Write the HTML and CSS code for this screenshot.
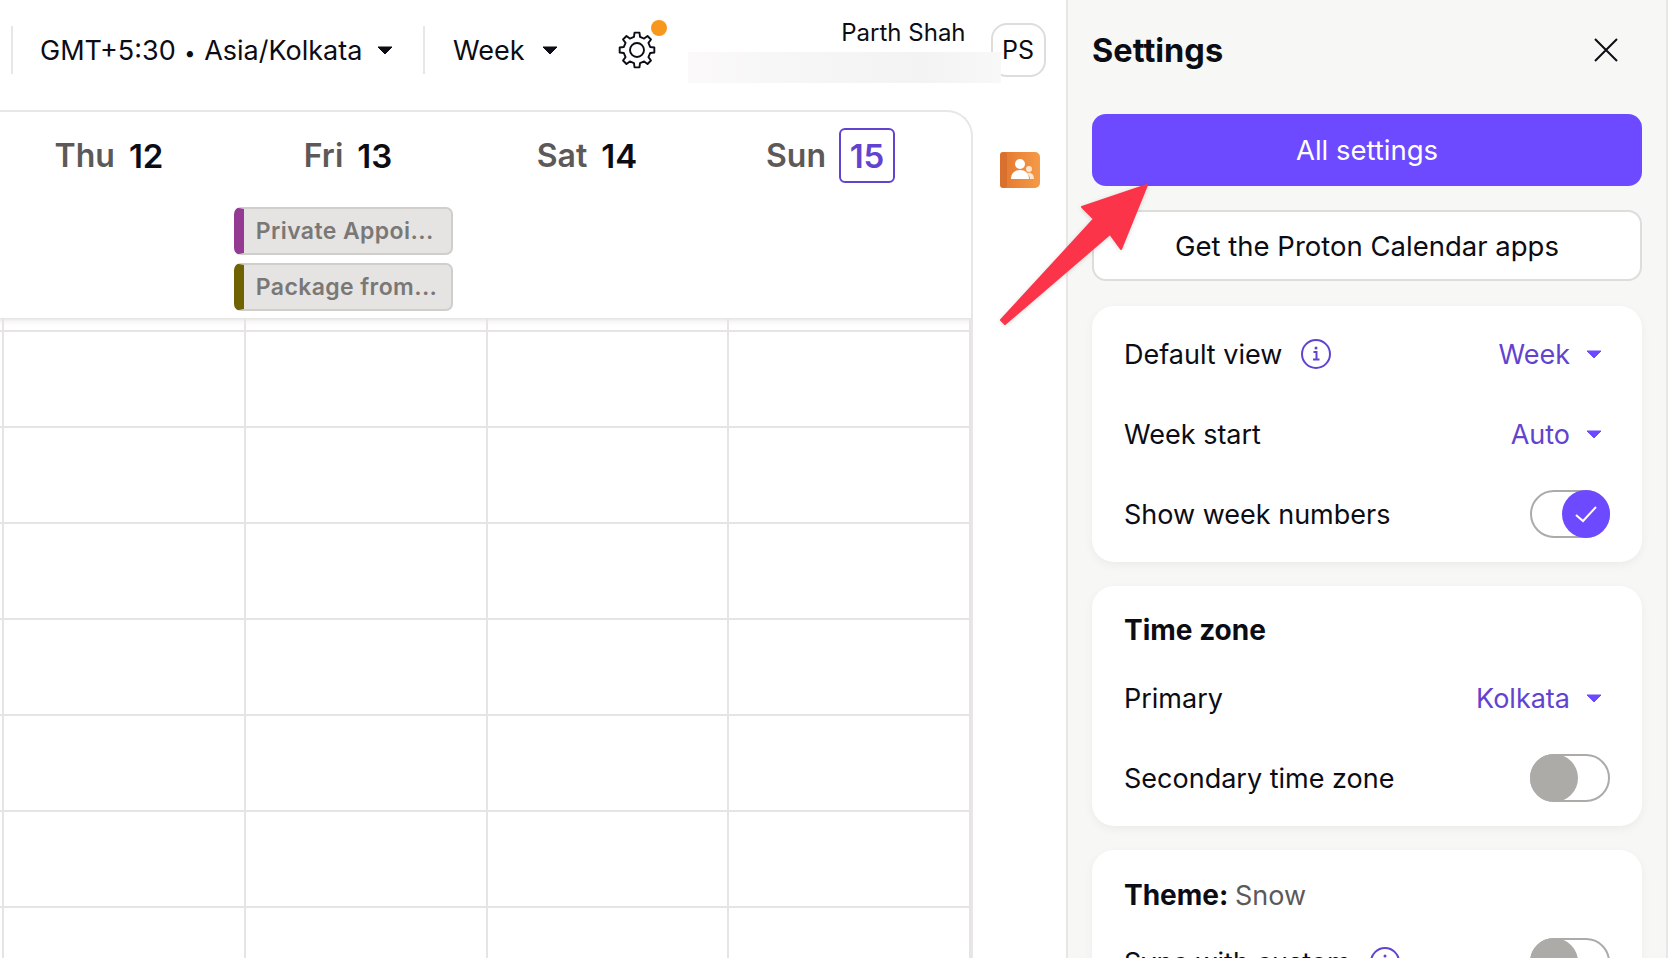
FILE: index.html
```html
<!DOCTYPE html>
<html lang="en">
<head>
<meta charset="utf-8">
<title>Proton Calendar</title>
<link rel="stylesheet" href="styles.css">
</head>
<body>
<div class="app">
  <main class="main">
    <header class="topbar">
      <span class="sep first"></span>
      <button class="tool tz"><span>GMT+5:30 <span class="bullet">•</span> Asia/Kolkata</span><svg class="caret" viewBox="0 0 16 9"><polygon points="1,1 15,1 8,8"/></svg></button>
      <span class="sep"></span>
      <button class="tool view"><span>Week</span><svg class="caret" viewBox="0 0 16 9"><polygon points="1,1 15,1 8,8"/></svg></button>
      <span class="gear-wrap">
        <svg class="gear" viewBox="-20 -20 40 40"><polygon points="-3.04,-13.15 -2.44,-17.33 2.44,-17.33 3.04,-13.15 7.15,-11.45 10.53,-13.98 13.98,-10.53 11.45,-7.15 13.15,-3.04 17.33,-2.44 17.33,2.44 13.15,3.04 11.45,7.15 13.98,10.53 10.53,13.98 7.15,11.45 3.04,13.15 2.44,17.33 -2.44,17.33 -3.04,13.15 -7.15,11.45 -10.53,13.98 -13.98,10.53 -11.45,7.15 -13.15,3.04 -17.33,2.44 -17.33,-2.44 -13.15,-3.04 -11.45,-7.15 -13.98,-10.53 -10.53,-13.98 -7.15,-11.45"/><circle r="7"/></svg>
        <span class="dot"></span>
      </span>
      <div class="user">
        <span class="user-name">Parth Shah</span>
        <span class="avatar">PS</span>
        <span class="redact"></span>
      </div>
    </header>
    <div class="body-row">
      <section class="calendar">
        <div class="days">
          <div class="day"><span class="dow">Thu</span><span class="num">12</span></div>
          <div class="day"><span class="dow">Fri</span><span class="num">13</span></div>
          <div class="day"><span class="dow">Sat</span><span class="num">14</span></div>
          <div class="day"><span class="dow">Sun</span><span class="num today">15</span></div>
        </div>
        <div class="cols allday">
          <div class="events">
            <div class="event purple">Private Appoi...</div>
            <div class="event olive">Package from...</div>
          </div>
        </div>
        <div class="grid">
          <div class="cell"></div><div class="cell"></div><div class="cell"></div><div class="cell"></div><div class="cell"></div>
          <div class="cell"></div><div class="cell"></div><div class="cell"></div><div class="cell"></div><div class="cell"></div>
          <div class="cell"></div><div class="cell"></div><div class="cell"></div><div class="cell"></div><div class="cell"></div>
          <div class="cell"></div><div class="cell"></div><div class="cell"></div><div class="cell"></div><div class="cell"></div>
          <div class="cell"></div><div class="cell"></div><div class="cell"></div><div class="cell"></div><div class="cell"></div>
          <div class="cell"></div><div class="cell"></div><div class="cell"></div><div class="cell"></div><div class="cell"></div>
          <div class="cell"></div><div class="cell"></div><div class="cell"></div><div class="cell"></div><div class="cell"></div>
          <div class="cell"></div><div class="cell"></div><div class="cell"></div><div class="cell"></div><div class="cell"></div>
        </div>
      </section>
      <aside class="rail">
        <svg class="contacts" viewBox="0 0 40 36">
          <defs><linearGradient id="og" x1="0" y1="0" x2="1" y2="0"><stop offset="0" stop-color="#e2762f"/><stop offset="1" stop-color="#f59a48"/></linearGradient></defs>
          <rect width="40" height="36" rx="5" fill="url(#og)"/>
          <rect width="7" height="36" rx="3" fill="#d9702e"/>
          <circle cx="20" cy="12" r="5" fill="#fff"/>
          <path d="M11 27c0-6 4-9 9-9s9 3 9 9z" fill="#fff"/>
          <circle cx="29" cy="17" r="3" fill="#fde6d2"/>
          <path d="M27 21c4-1 7 1 7 6h-4c0-2-1-4-3-6z" fill="#fde6d2"/>
        </svg>
      </aside>
    </div>
  </main>

  <aside class="settings">
    <div class="settings-head">
      <h1>Settings</h1>
      <svg class="close" viewBox="0 0 24 24"><path d="M1 1 23 23M23 1 1 23"/></svg>
    </div>
    <button class="btn primary">All settings</button>
    <button class="btn outline">Get the Proton Calendar apps</button>

    <section class="card">
      <div class="row">
        <span class="label">Default view<svg class="info" viewBox="0 0 30 30"><circle cx="15" cy="15" r="14"/><path d="M12.5 13h3v7M12 20.5h6.500"/><circle class="info-dot" cx="15" cy="9" r="1.500"/></svg></span>
        <span class="value">Week<svg class="caret small" viewBox="0 0 16 9"><polygon points="1,1 15,1 8,8"/></svg></span>
      </div>
      <div class="row">
        <span class="label">Week start</span>
        <span class="value">Auto<svg class="caret small" viewBox="0 0 16 9"><polygon points="1,1 15,1 8,8"/></svg></span>
      </div>
      <div class="row">
        <span class="label">Show week numbers</span>
        <span class="toggle on"><span class="knob"><svg viewBox="0 0 24 24"><path d="M2 13l7 6L22 5"/></svg></span></span>
      </div>
    </section>

    <section class="card">
      <h2 class="card-title">Time zone</h2>
      <div class="row">
        <span class="label">Primary</span>
        <span class="value">Kolkata<svg class="caret small" viewBox="0 0 16 9"><polygon points="1,1 15,1 8,8"/></svg></span>
      </div>
      <div class="row">
        <span class="label">Secondary time zone</span>
        <span class="toggle"><span class="knob"></span></span>
      </div>
    </section>

    <section class="card">
      <h2 class="card-title theme">Theme: <span class="muted">Snow</span></h2>
      <div class="row">
        <span class="label">Sync with custom<svg class="info" viewBox="0 0 30 30"><circle cx="15" cy="15" r="14"/><path d="M12.5 13h3v7M12 20.5h6.500"/><circle class="info-dot" cx="15" cy="9" r="1.500"/></svg></span>
        <span class="toggle"><span class="knob"></span></span>
      </div>
    </section>
  </aside>
</div>
<svg class="arrow" viewBox="990 175 170 160"><polygon points="1147,185 1082,207 1094,219 1001,320 1005,324 1110,234 1121,249"/></svg>
</body>
</html>
```

FILE: styles.css
```css
* { box-sizing: border-box; }
html, body { margin: 0; height: 100%; overflow: hidden; }
body { background: #fff; color: #0c0c14; font-family: Inter, "Liberation Sans", sans-serif; font-size: 27px; }
button { font: inherit; color: inherit; background: none; border: 0; padding: 0; }

.app { display: flex; height: 958px; }
.main { width: 1066px; flex: none; display: flex; flex-direction: column; }

/* top bar */
.topbar { height: 110px; flex: none; display: flex; align-items: center; padding: 0 0 10px 11px; }
.sep { width: 2px; height: 48px; background: #e8e7e5; flex: none; }
.tool { display: flex; align-items: center; flex: none; white-space: nowrap; }
.tz { margin: 0 30px 0 27px; width: 353px; justify-content: space-between; }
.bullet { font-size: 20px; margin: 0 1px; }
.view { margin-left: 28px; gap: 17px; }
.caret { width: 16px; height: 9px; fill: currentColor; stroke: currentColor; stroke-width: 1; stroke-linejoin: round; display: block; flex: none; }
.gear-wrap { position: relative; margin-left: 59px; width: 40px; height: 40px; flex: none; }
.gear { width: 40px; height: 40px; display: block; fill: none; stroke: #0c0c14; stroke-width: 1.9; stroke-linejoin: round; }
.dot { position: absolute; left: 34px; top: -10px; width: 16px; height: 16px; border-radius: 50%; background: #f7971d; }
.user { margin-left: 34px; width: 355px; height: 54px; flex: none; position: relative; display: flex; justify-content: flex-end; }
.user-name { font-size: 24px; line-height: 24px; margin: -2px 25px 0 0; white-space: nowrap; }
.avatar { width: 55px; height: 54px; flex: none; background: #fff; border: 2px solid #dedddb; border-radius: 16px; display: flex; align-items: center; justify-content: center; font-size: 25px; }
.redact { position: absolute; left: -3px; top: 29px; width: 313px; height: 31px; background: linear-gradient(90deg, #fbf9f9, #f5f5f5 50%, #f3f3f4 75%, #f8f8f8); }

/* calendar */
.body-row { flex: 1; min-height: 0; display: flex; }
.calendar { width: 973px; flex: none; border-top: 2px solid #e8e7e5; border-right: 2px solid #e8e7e5; border-top-right-radius: 26px; overflow: hidden; display: flex; flex-direction: column; }
.cols { display: grid; grid-template-columns: 4px repeat(4, 241.75px); flex: none; }
.days { display: grid; grid-template-columns: repeat(3, 239px) 248px; padding: 16px 0 0 4px; height: 71px; flex: none; }
.day { display: flex; align-items: center; justify-content: center; gap: 14px; padding-right: 29px; height: 55px; font-size: 32px; font-weight: 600; }
.dow { color: #5c5958; }
.num { color: #0c0c14; font-size: 33px; }
.today { width: 56px; height: 55px; display: flex; align-items: center; justify-content: center; color: #6243d0; border: 2px solid #6243d0; border-radius: 6px; margin-left: -1px; }
.allday { padding-top: 24px; height: 135px; }
.events { grid-column: 3; margin-left: -12px; width: 219px; display: flex; flex-direction: column; gap: 8px; }
.event { height: 48px; border: 2px solid #cfcecb; border-left-width: 10px; border-radius: 7px; background: #e5e4e2; color: #7a7876; font-size: 23px; font-weight: 600; letter-spacing: .4px; line-height: 44px; padding-left: 12px; white-space: nowrap; overflow: hidden; }
.purple { border-left-color: #943a93; }
.olive { border-left-color: #6f6200; }
.grid { display: grid; grid-template-columns: 4px repeat(4, 241.75px); grid-template-rows: 14px repeat(7, 96px); flex: none; background: linear-gradient(#e4e3e1, #f6f6f5 25%, #fff 60%) no-repeat top / 100% 13px; }
.cell { border-right: 2px solid #e6e5e3; border-bottom: 2px solid #e6e5e3; }
.rail { flex: 1; display: flex; align-items: flex-start; padding: 42px 0 0 27px; }
.contacts { width: 40px; height: 36px; display: block; }

/* settings panel */
.settings { width: 602px; flex: none; height: 958px; overflow: hidden; background: #f7f7f6; border-left: 2px solid #e8e7e5; border-right: 2px solid #e8e7e5; padding: 0 24px; display: flex; flex-direction: column; }
.settings-head { height: 100px; margin-bottom: 14px; flex: none; display: flex; align-items: center; justify-content: space-between; padding-right: 24px; }
.settings-head h1 { margin: 0; font-size: 32.5px; font-weight: 700; }
.close { width: 24px; height: 24px; fill: none; stroke: #0c0c14; stroke-width: 2; display: block; }
.btn { width: 550px; flex: none; border-radius: 14px; text-align: center; font-size: 27.5px; }
.primary { height: 72px; background: #6d4aff; color: #fff; margin-bottom: 24px; }
.outline { height: 71px; background: #fff; border: 2px solid #dedddb; margin-bottom: 25px; }
.card { width: 550px; flex: none; background: #fff; border-radius: 22px; box-shadow: 0 3px 10px rgba(0,0,0,.05); padding: 8px 32px; margin-bottom: 24px; }
.row { height: 80px; display: flex; align-items: center; justify-content: space-between; }
.label { display: flex; align-items: center; gap: 19px; white-space: nowrap; }
.value { display: flex; align-items: center; gap: 16px; color: #6243d0; padding-right: 8px; }
.value .caret { color: #6d4aff; }
.info { width: 30px; height: 30px; fill: none; stroke: #6243d0; stroke-width: 2; flex: none; }
.info-dot { fill: #6243d0; stroke: none; }
.toggle { width: 80px; height: 48px; flex: none; border: 2px solid #acaba8; border-radius: 24px; display: flex; position: relative; }
.knob { position: absolute; left: -2px; top: -2px; width: 48px; height: 48px; border-radius: 50%; background: #acaba8; display: flex; align-items: center; justify-content: center; }
.toggle.on .knob { left: auto; right: -2px; background: #6d4aff; }
.knob svg { width: 24px; height: 24px; fill: none; stroke: #fff; stroke-width: 2; }
.card-title { margin: 16px 0 8px; height: 40px; line-height: 40px; font-size: 28px; font-weight: 700; }
.theme { margin-top: 17px; margin-bottom: 7px; }
.muted { font-weight: 400; color: #5c5958; font-size: 27px; }

/* annotation */
.arrow { position: absolute; left: 990px; top: 175px; width: 170px; height: 160px; fill: #fb3449; stroke: #fb3449; stroke-width: 2; stroke-linejoin: round; filter: drop-shadow(0 1px 2px rgba(0,0,0,.15)); }
```
